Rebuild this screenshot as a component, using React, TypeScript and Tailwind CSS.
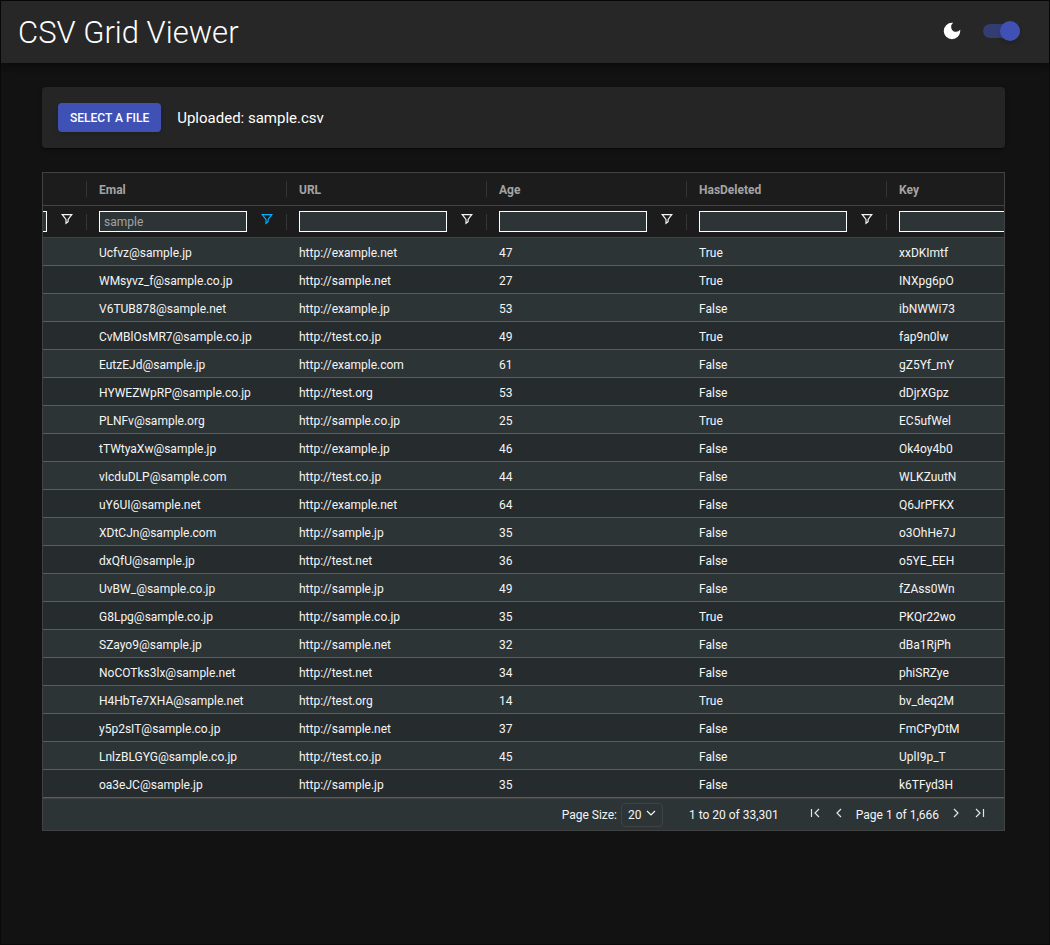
import { useState } from "react";

type Row = [email: string, url: string, age: number, deleted: string, key: string];

const rows: Row[] = [
  ["Ucfvz@sample.jp", "http://example.net", 47, "True", "xxDKImtf"],
  ["WMsyvz_f@sample.co.jp", "http://sample.net", 27, "True", "INXpg6pO"],
  ["V6TUB878@sample.net", "http://example.jp", 53, "False", "ibNWWi73"],
  ["CvMBlOsMR7@sample.co.jp", "http://test.co.jp", 49, "True", "fap9n0lw"],
  ["EutzEJd@sample.jp", "http://example.com", 61, "False", "gZ5Yf_mY"],
  ["HYWEZWpRP@sample.co.jp", "http://test.org", 53, "False", "dDjrXGpz"],
  ["PLNFv@sample.org", "http://sample.co.jp", 25, "True", "EC5ufWel"],
  ["tTWtyaXw@sample.jp", "http://example.jp", 46, "False", "Ok4oy4b0"],
  ["vIcduDLP@sample.com", "http://test.co.jp", 44, "False", "WLKZuutN"],
  ["uY6UI@sample.net", "http://example.net", 64, "False", "Q6JrPFKX"],
  ["XDtCJn@sample.com", "http://sample.jp", 35, "False", "o3OhHe7J"],
  ["dxQfU@sample.jp", "http://test.net", 36, "False", "o5YE_EEH"],
  ["UvBW_@sample.co.jp", "http://sample.jp", 49, "False", "fZAss0Wn"],
  ["G8Lpg@sample.co.jp", "http://sample.co.jp", 35, "True", "PKQr22wo"],
  ["SZayo9@sample.jp", "http://sample.net", 32, "False", "dBa1RjPh"],
  ["NoCOTks3lx@sample.net", "http://test.net", 34, "False", "phiSRZye"],
  ["H4HbTe7XHA@sample.net", "http://test.org", 14, "True", "bv_deq2M"],
  ["y5p2sIT@sample.co.jp", "http://sample.net", 37, "False", "FmCPyDtM"],
  ["LnlzBLGYG@sample.co.jp", "http://test.co.jp", 45, "False", "UplI9p_T"],
  ["oa3eJC@sample.jp", "http://sample.jp", 35, "False", "k6TFyd3H"],
];

const columns = ["", "Emal", "URL", "Age", "HasDeleted", "Key"];

function FilterIcon() {
  return (
    <svg viewBox="0 0 12 12" className="size-3" fill="none" stroke="currentColor" strokeWidth="1.2" aria-hidden="true">
      <path d="M1.2 1.6h9.6L7.1 6.4v2.2L5 10.3V6.4z" />
    </svg>
  );
}

function Filter({ name }: { name: string }) {
  const [value, setValue] = useState(name === "Emal" ? "sample" : "");
  return (
    <div className="flex items-center">
      <input
        aria-label={`${name || "Name"} filter`}
        value={value}
        onChange={(e) => setValue(e.target.value)}
        className="h-[21px] w-[148px] border border-white bg-[#2d3436] px-1 text-xs text-[#a0a3a3] outline-none"
      />
      <button
        type="button"
        aria-label={`Open ${name || "name"} filter menu`}
        className={value ? "ml-3.5 pb-1.5 text-[#00b0ff]" : "ml-3.5 pb-1.5 text-[#f5f5f5]"}
      >
        <FilterIcon />
      </button>
    </div>
  );
}

function PageButton({ label, d }: { label: string; d: string }) {
  return (
    <button type="button" aria-label={label} className="flex size-4 items-center justify-center pb-1 text-[#e4e5e5]">
      <svg viewBox="0 0 16 16" className="size-4 shrink-0" fill="none" stroke="currentColor" strokeWidth="1.2" aria-hidden="true">
        <path d={d} />
      </svg>
    </button>
  );
}

function ThemeSwitch() {
  const [dark, setDark] = useState(true);
  return (
    <label className="flex items-center gap-5 pb-0.5">
      <svg viewBox="0 0 24 24" className="size-[22px] fill-white" aria-hidden="true">
        <path d="M12 3a9 9 0 1 0 9 9c0-.46-.04-.92-.1-1.36a5.389 5.389 0 0 1-4.4 2.26 5.403 5.403 0 0 1-3.14-9.8c-.44-.06-.9-.1-1.36-.1z" />
      </svg>
      <input
        type="checkbox"
        role="switch"
        aria-label="Dark mode"
        checked={dark}
        onChange={(e) => setDark(e.target.checked)}
        className="peer sr-only"
      />
      <span className="flex h-3.5 w-[37px] items-center rounded-full bg-[#333d71] peer-checked:justify-end">
        <span className="size-5 rounded-full bg-[#3f51b5] shadow-md" />
      </span>
    </label>
  );
}

export default function App() {
  return (
    <div className="flex min-h-screen flex-col border border-[#0a0a0a] bg-[#121212] font-[Roboto,sans-serif] text-white">
      <header className="flex h-[62px] items-center justify-between bg-[#272727] pr-[29px] pl-[17px] shadow-[0_2px_4px_-1px_rgba(0,0,0,0.2),0_4px_5px_rgba(0,0,0,0.14),0_1px_10px_rgba(0,0,0,0.12)]">
        <h1 className="pt-0.5 text-[31px] leading-10 font-light">CSV Grid Viewer</h1>
        <ThemeSwitch />
      </header>
      <main className="flex flex-col gap-6 pt-6 pr-11 pl-[41px]">
        <section className="flex items-center gap-4 rounded bg-[#252525] p-4 shadow-[0_3px_1px_-2px_rgba(0,0,0,0.2),0_2px_2px_rgba(0,0,0,0.14),0_1px_5px_rgba(0,0,0,0.12)]">
          <button
            type="button"
            className="h-[29px] rounded bg-[#3f51b5] px-3 text-xs font-medium uppercase shadow-md"
          >
            Select a file
          </button>
          <p className="text-[15px] leading-5">Uploaded: sample.csv</p>
        </section>
        <section className="border border-[#424242] bg-[#2d3436] text-xs text-[#f5f5f5]">
          <div className="overflow-hidden">
            <table className="-ml-39 w-[1200px] table-fixed border-separate border-spacing-0 text-left">
              <thead className="bg-[#1c1c1c]">
                <tr>
                  {columns.map((name) => (
                    <th key={name} scope="col" className="h-[33px] border-b border-[#424242] p-0 font-bold text-[#a4a4a4]">
                      <div className="flex h-4 items-center border-r border-[#353535] pl-3">
                        <span className="pt-0.5">{name}</span>
                      </div>
                    </th>
                  ))}
                </tr>
                <tr>
                  {columns.map((name) => (
                    <td key={name} className="h-8 border-b border-[#424242] p-0">
                      <div className="flex h-4 items-center border-r border-[#353535] pl-3">
                        <Filter name={name} />
                      </div>
                    </td>
                  ))}
                </tr>
              </thead>
              <tbody>
                {rows.map((row) => (
                  <tr key={row[0]} className="odd:bg-[#2d3436] even:bg-[#262c2e]">
                    {["", ...row].map((cell, i) => (
                      <td key={i} className="h-7 border-b border-[#5c5c5c] py-0 pr-0 pl-3 pt-0.5">
                        {cell}
                      </td>
                    ))}
                  </tr>
                ))}
              </tbody>
            </table>
          </div>
          <footer className="flex h-8 items-center justify-end border-t border-[#424242] pr-4">
            <label className="flex items-center gap-1">
              Page Size:
              <span className="grid items-center">
                <select
                  defaultValue="20"
                  className="col-start-1 row-start-1 h-6 w-[42px] appearance-none rounded border border-[#424242] bg-transparent pl-1.5 outline-none"
                >
                  <option>20</option>
                  <option>50</option>
                  <option>100</option>
                </select>
                <svg viewBox="0 0 16 16" className="pointer-events-none col-start-1 row-start-1 mr-1 mb-1 size-4 justify-self-end" fill="none" stroke="currentColor" strokeWidth="1.2" aria-hidden="true">
                  <path d="M4 6l4 4 4-4" />
                </svg>
              </span>
            </label>
            <span className="ml-6.5">1 to 20 of 33,301</span>
            <nav aria-label="Pages" className="ml-7 flex items-center gap-2">
              <PageButton label="First page" d="M4.5 4v8M12 4L8 8l4 4" />
              <PageButton label="Previous page" d="M10 4L6 8l4 4" />
              <span className="px-px">Page 1 of 1,666</span>
              <PageButton label="Next page" d="M6 4l4 4-4 4" />
              <PageButton label="Last page" d="M4 4l4 4-4 4M11.5 4v8" />
            </nav>
          </footer>
        </section>
      </main>
    </div>
  );
}
